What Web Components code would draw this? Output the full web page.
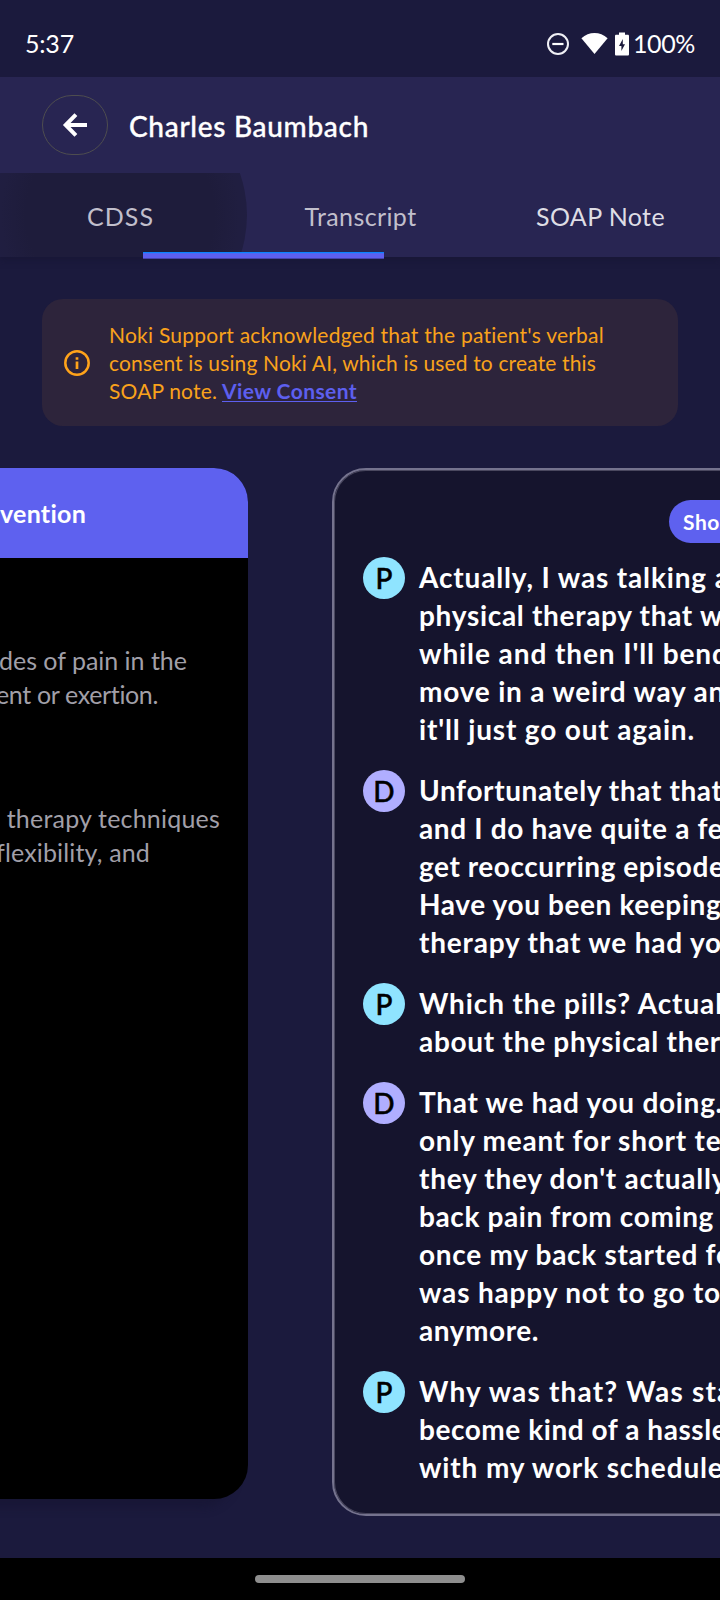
<!DOCTYPE html>
<html lang="en">
<head>
<meta charset="utf-8">
<title>Charles Baumbach</title>
<style>
html, body { margin: 0; height: 1600px; overflow: hidden; background: #1b1a3d; }
body { font-family: Lato, "Noto Sans", sans-serif; color: #fff; }
</style>
</head>
<body>
<app-screen>
  <status-bar slot="status"></status-bar>
  <app-header slot="header"></app-header>
  <consent-banner slot="banner"></consent-banner>
  <plan-card slot="page"></plan-card>
  <transcript-card slot="page">
    <speech-turn who="P">
      <fit-line w="288" tail="2">Actually, I was talking a</fit-line>
      <fit-line w="274" tail="2">physical therapy that w</fit-line>
      <fit-line w="236" tail="5">while and then I'll bend</fit-line>
      <fit-line w="267" tail="3">move in a weird way an</fit-line>
      <fit-line w="276" tail="0">it'll just go out again.</fit-line>
    </speech-turn>
    <speech-turn who="D">
      <fit-line w="243" tail="5">Unfortunately that that</fit-line>
      <fit-line w="271" tail="3">and I do have quite a fe</fit-line>
      <fit-line w="197" tail="8">get reoccurring episode</fit-line>
      <fit-line w="193" tail="8">Have you been keeping</fit-line>
      <fit-line w="264" tail="3">therapy that we had yo</fit-line>
    </speech-turn>
    <speech-turn who="P">
      <fit-line w="212" tail="7">Which the pills? Actual</fit-line>
      <fit-line w="240" tail="5">about the physical ther</fit-line>
    </speech-turn>
    <speech-turn who="D">
      <fit-line w="304" tail="0">That we had you doing.</fit-line>
      <fit-line w="268" tail="3">only meant for short te</fit-line>
      <fit-line w="198" tail="9">they they don't actually</fit-line>
      <fit-line w="295" tail="0">back pain from coming</fit-line>
      <fit-line w="279" tail="3">once my back started fe</fit-line>
      <fit-line w="302" tail="0">was happy not to go to</fit-line>
      <fit-line w="120" tail="0">anymore.</fit-line>
    </speech-turn>
    <speech-turn who="P">
      <fit-line w="265" tail="4">Why was that? Was sta</fit-line>
      <fit-line w="221" tail="7">become kind of a hassle</fit-line>
      <fit-line w="180" tail="9">with my work schedule</fit-line>
    </speech-turn>
  </transcript-card>
  <gesture-bar slot="nav"></gesture-bar>
</app-screen>

<script>
const define = (name, html, connected) => {
  const tpl = document.createElement('template');
  tpl.innerHTML = html.trim();
  customElements.define(name, class extends HTMLElement {
    constructor() {
      super();
      this.attachShadow({ mode: 'open' }).append(tpl.content.cloneNode(true));
    }
    connectedCallback() { if (connected) connected.call(this); }
  });
};

define('app-screen', `
<style>
:host { display: flex; flex-direction: column; width: 720px; height: 1600px; overflow: hidden; background: #1b1a3d; }
.pages { display: flex; align-items: flex-start; gap: 84px; flex: 1; min-height: 0; margin-top: 42px; }
</style>
<slot name="status"></slot><slot name="header"></slot><slot name="banner"></slot>
<div class="pages"><slot name="page"></slot></div>
<slot name="nav"></slot>`);

define('status-bar', `
<style>
:host { display: flex; align-items: center; height: 77px; padding: 9px 25px 0 25px; box-sizing: border-box; background: #1b1a3d; font-size: 25px; line-height: 34px; }
.icons { margin-left: auto; display: flex; align-items: center; }
svg { display: block; margin-top: 1px; }
.dnd { margin-right: 11px; } .wifi { margin-right: 7px; } .bat { margin-right: 4px; }
</style>
<fit-line w="49" tail="0">5:37</fit-line>
<div class="icons">
  <svg class="dnd" width="24" height="24" viewBox="0 0 24 24" fill="none" stroke="#fff"><circle cx="12" cy="12" r="10" stroke-width="2" stroke="#f0f0f5"/><path d="M6.300 12h11.200" stroke-width="2.200"/></svg>
  <svg class="wifi" width="27" height="24" viewBox="0 0 27 24"><path fill="#fff" d="M.4 6.200C8-.8 19-.8 26.600 6.200L13.500 22z"/></svg>
  <svg class="bat" width="14" height="24" viewBox="0 0 14 24"><path fill="#fff" fill-rule="evenodd" d="M4 .5h6v2.200h2.700c.8 0 1.300.5 1.300 1.300v18.200c0 .8-.5 1.300-1.300 1.300H1.300C.5 23.500 0 23 0 22.200V4c0-.8.5-1.300 1.300-1.300H4zM7.800 7L4 13.900h2.400v5.200L10 12.200H7.800z"/></svg>
  <fit-line w="62" tail="0">100%</fit-line>
</div>`);

define('app-header', `
<style>
:host { display: block; height: 180px; background: #282552; position: relative; box-shadow: 0 3px 7px #15132f80; clip-path: inset(0 0 -12px 0); z-index: 1; }
.title { display: flex; align-items: center; height: 96px; padding-left: 42px; box-sizing: border-box; }
.back { width: 66px; height: 60px; border: 1px solid #4e4d4f; border-radius: 30px; box-sizing: border-box; display: flex; align-items: center; justify-content: center; margin-right: 21px; }
.name { font-size: 28px; font-weight: 500; line-height: 36px; padding-top: 1px; -webkit-text-stroke: .35px #fff; }
.tabs { display: grid; grid-template-columns: repeat(3, 240px); height: 84px; position: relative; overflow: hidden; }
.tab { display: flex; align-items: center; justify-content: center; font-size: 25px; line-height: 32px; padding: 1px 0 0 1px; color: #c1bfcc; position: relative; z-index: 1; }
.tab.on { color: #dedde5; }
.ripple { position: absolute; width: 254px; height: 254px; left: -7px; top: -85px; border-radius: 50%; background: radial-gradient(closest-side, #1e1c3b 0 74%, #201e40 94%, #201e41 100%); }
.bar { position: absolute; left: 143px; bottom: -2px; width: 241px; height: 7px; background: linear-gradient(#0a84ff 0 1px, #4a69f3 1px 2px, #5d5fef 2px 6px, #4443ab 6px); z-index: 2; }
</style>
<div class="title">
  <div class="back"><svg width="26" height="26" viewBox="0 0 26 26" fill="none" stroke="#fff" stroke-width="4"><path d="M13.900 2.700L3.700 13l10.200 10.300M3.800 13H25"/></svg></div>
  <div class="name"><fit-line w="240" tail="0">Charles Baumbach</fit-line></div>
</div>
<div class="tabs">
  <div class="ripple"></div>
  <div class="tab"><fit-line w="67" tail="0">CDSS</fit-line></div>
  <div class="tab"><fit-line w="112" tail="0">Transcript</fit-line></div>
  <div class="tab on"><fit-line w="129" tail="0">SOAP Note</fit-line></div>
</div>
<div class="bar"></div>`);

define('consent-banner', `
<style>
:host { display: flex; align-items: center; margin: 42px 42px 0; height: 127px; border-radius: 21px; background: #2d243b; padding-left: 21px; box-sizing: border-box; color: #f9a21b; font-size: 21px; line-height: 28px; }
svg { display: block; margin-right: 18px; flex: none; }
.row { display: flex; gap: 5px; }
.link { color: #5d5fef; font-weight: 700; text-decoration: underline; text-decoration-thickness: 1px; text-underline-offset: 2px; }
</style>
<svg width="28" height="28" viewBox="0 0 28 28" fill="none" stroke="#ffa31a"><circle cx="14" cy="14" r="11.700" stroke-width="2.500"/><path d="M14 12.500v7.500M14 8.300v2.500" stroke-width="2.700"/></svg>
<div>
  <fit-line w="495" tail="0">Noki Support acknowledged that the patient's verbal</fit-line>
  <fit-line w="487" tail="0">consent is using Noki AI, which is used to create this</fit-line>
  <div class="row"><fit-line w="108" tail="0">SOAP note.</fit-line><fit-line class="link" w="135" tail="0">View Consent</fit-line></div>
</div>`);

define('plan-card', `
<style>
:host { display: flex; flex-direction: column; flex: none; width: 248px; height: 1031px; border-radius: 0 34px 34px 0; background: #000; overflow: hidden; box-shadow: -14px 9px 9px #15132f80; font-size: 25px; line-height: 34px; color: #a19fa8; }
.head { height: 90px; box-sizing: border-box; background: #5e61ef; color: #fff; font-weight: 700; padding-top: 28px; }
.p1 { padding-top: 85px; } .p2 { padding-top: 90px; }
fit-line { margin-left: var(--x, 0); }
</style>
<div class="head"><fit-line w="86" tail="0">vention</fit-line></div>
<div class="p1"><fit-line style="--x:-1px" w="188" tail="0">des of pain in the</fit-line><fit-line style="--x:-4px" w="162" tail="0">ent or exertion.</fit-line></div>
<div class="p2"><fit-line style="--x:-6px" w="226" tail="0">l therapy techniques</fit-line><fit-line style="--x:-4px" w="154" tail="0">flexibility, and</fit-line></div>`);

define('transcript-card', `
<style>
:host { display: flex; flex-direction: column; flex: none; width: 720px; height: 1048px; box-sizing: border-box; border: 2px solid #75738e; border-radius: 34px; background: #15142d; box-shadow: inset 0 0 0 1px #4a485f; padding: 30px 29px 0; }
.pill { width: 180px; height: 43px; box-sizing: border-box; border-radius: 22px; background: #5e61ef; margin-left: 306px; padding: 8px 0 0 14px; font-size: 21px; line-height: 28px; font-weight: 700; }
.turns { display: flex; flex-direction: column; gap: 23px; margin-top: 14px; }
</style>
<div class="pill"><fit-line w="37" tail="0">Sho</fit-line></div>
<div class="turns"><slot></slot></div>`);

define('speech-turn', `
<style>
:host { display: flex; gap: 14px; font-size: 28px; line-height: 38px; font-weight: 700; }
.who { flex: none; width: 42px; height: 42px; border-radius: 50%; background: #8fe4ff; color: #000; text-align: center; line-height: 43px; font-weight: 500; -webkit-text-stroke: .5px #000; box-sizing: border-box; }
:host([who="D"]) .who { background: #b0aeff; }
.lines { padding-top: 1px; margin-bottom: -1px; }
</style>
<div class="who"></div><div class="lines"><slot></slot></div>`, function () {
  this.shadowRoot.querySelector('.who').textContent = this.getAttribute('who');
});

define('gesture-bar', `
<style>
:host { display: flex; flex: none; height: 42px; background: #000; justify-content: center; align-items: center; }
i { width: 210px; height: 8px; border-radius: 4px; background: #8e8e8e; }
</style><i></i>`);

/* One line of text tracked to a given advance width; the last "tail" characters are left out of the measure. */
define('fit-line', `
<style>:host { display: block; white-space: nowrap; width: max-content; font-kerning: normal; font-variant-ligatures: none; }</style><slot></slot>`, function () {
  const node = this.firstChild;
  const count = node.length - Number(this.getAttribute('tail'));
  const range = document.createRange();
  range.setStart(node, 0);
  range.setEnd(node, count);
  const natural = range.getBoundingClientRect().width;
  if (natural) this.style.letterSpacing = ((Number(this.getAttribute('w')) - natural) / count).toFixed(3) + 'px';
});
</script>
</body>
</html>
